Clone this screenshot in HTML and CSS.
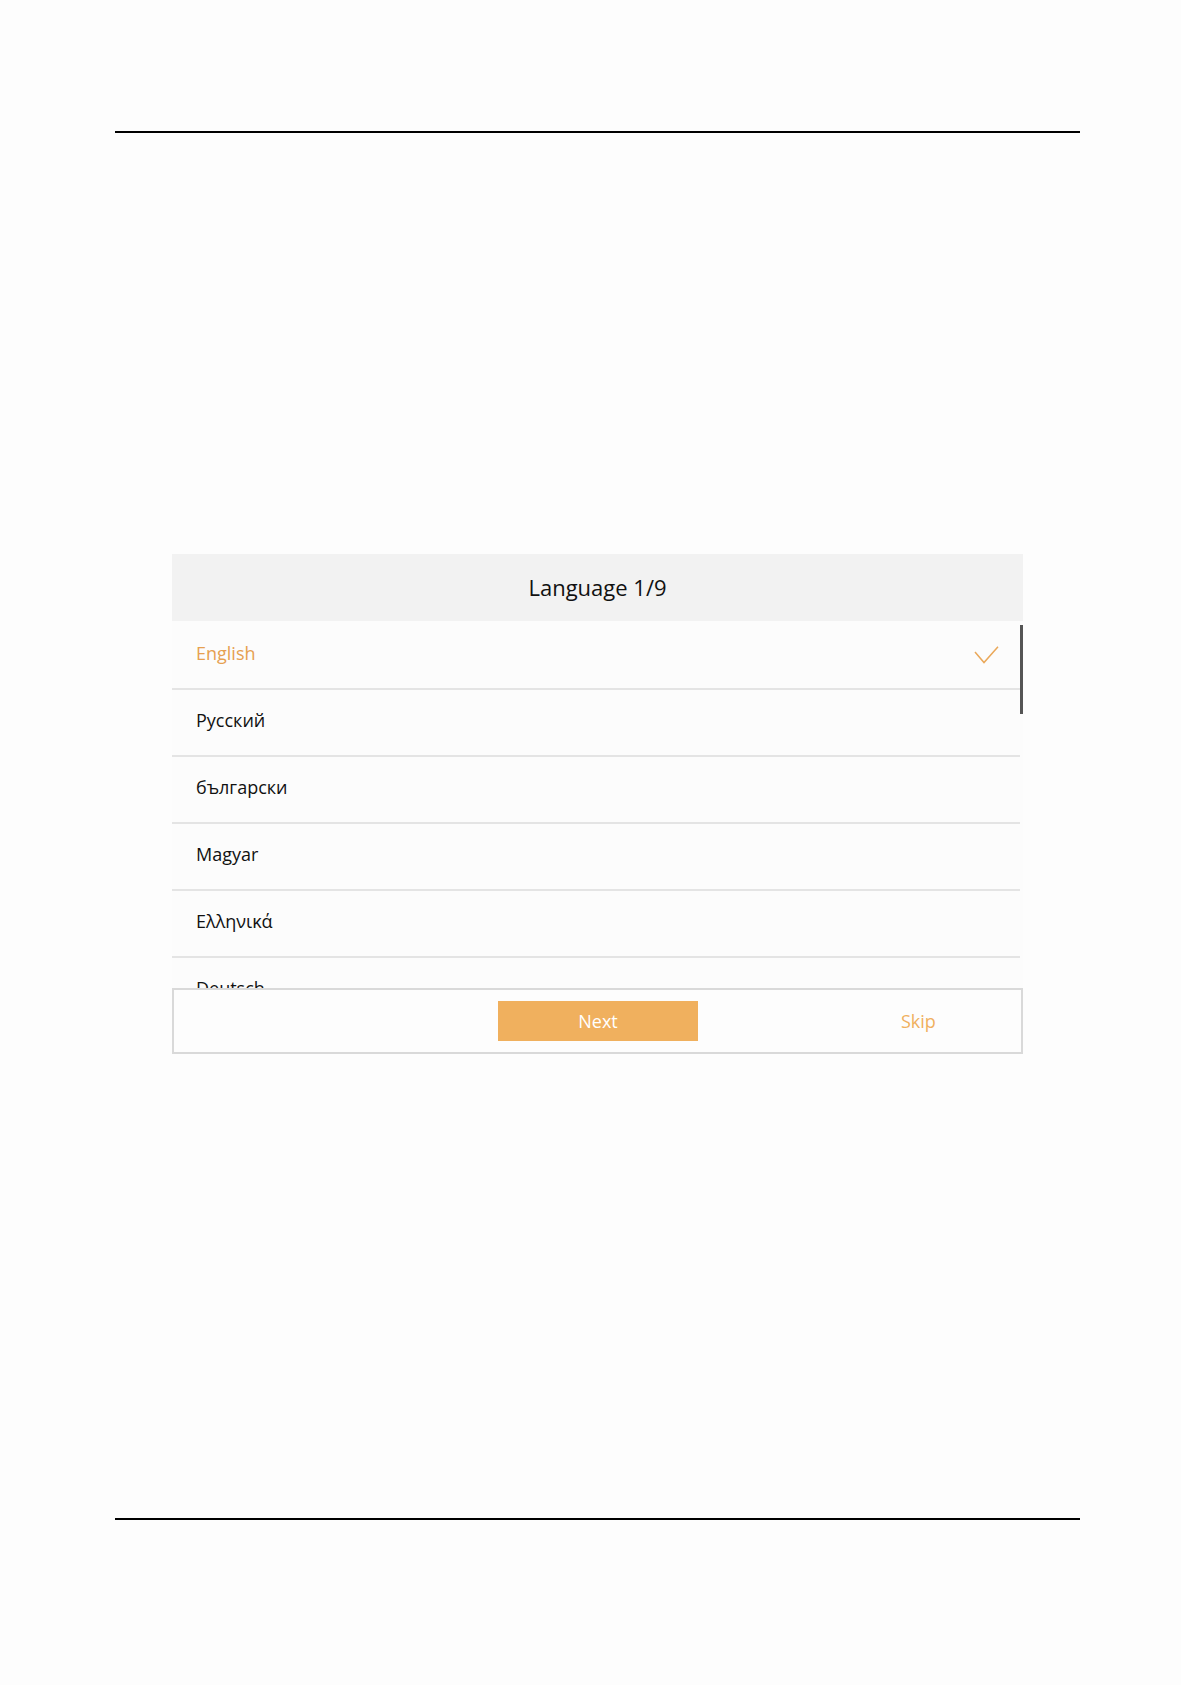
FILE: index.html
```html
<!DOCTYPE html>
<html>
<head>
<meta charset="utf-8">
<link rel="stylesheet" href="styles.css">
</head>
<body>
<div class="page">
  <div class="rule"></div>
  <div class="panel">
    <div class="panel-head">Language 1/9</div>
    <div class="list">
      <div class="row selected">
        <span>English</span>
        <svg class="check" width="26" height="20" viewBox="0 0 26 20"><path d="M1 6 L10 16.5 L24 0.8" fill="none" stroke="#eaa85a" stroke-width="1.5"/></svg>
      </div>
      <div class="row"><span>Русский</span></div>
      <div class="row"><span>български</span></div>
      <div class="row"><span>Magyar</span></div>
      <div class="row"><span>Ελληνικά</span></div>
      <div class="row"><span>Deutsch</span></div>
      <div class="scrollbar"></div>
    </div>
    <div class="panel-foot">
      <button class="btn-next">Next</button>
      <span class="skip">Skip</span>
    </div>
  </div>
  <div class="rule bottom"></div>
</div>
</body>
</html>
```
FILE: styles.css
```css
html, body {
  margin: 0;
  padding: 0;
  background: #fdfdfd;
}
body {
  font-family: "Open Sans", "Noto Sans", sans-serif;
  color: #111;
}
.page {
  padding: 131px 101px 0 115px;
  height: 1685px;
  box-sizing: border-box;
}
.rule {
  height: 2px;
  background: #000;
}
.rule.bottom {
  margin-top: 464px;
}
.panel {
  margin: 421px 0 0 57px;
  width: 851px;
}
.panel-head {
  height: 67px;
  background: #f2f2f2;
  display: flex;
  align-items: center;
  justify-content: center;
  font-size: 22px;
  padding-bottom: 2px;
  box-sizing: border-box;
  color: #111;
}
.list {
  position: relative;
  height: 365px;
  padding-top: 2px;
  overflow: hidden;
  padding-right: 3px;
  background: #fcfcfc;
}
.row {
  box-sizing: border-box;
  height: 67px;
  border-bottom: 2px solid #e4e4e4;
  background: #fcfcfc;
  display: flex;
  align-items: center;
  justify-content: space-between;
  padding: 0 20px 6px 24px;
  font-size: 18px;
  color: #111;
}
.row.selected {
  color: #e6a050;
}
.check {
  display: block;
  margin-top: 6px;
}
.scrollbar {
  position: absolute;
  right: 0;
  top: 4px;
  width: 3px;
  height: 89px;
  background: #555;
}
.panel-foot {
  height: 62px;
  border: 2px solid #d9d9d9;
  background: #fdfdfd;
  display: flex;
  align-items: center;
  position: relative;
}
.btn-next {
  margin-left: 324px;
  width: 200px;
  height: 40px;
  border: none;
  background: #f0b05e;
  color: #fff;
  font-family: inherit;
  font-size: 18px;
  padding: 0;
}
.skip {
  margin-left: 203px;
  color: #f0b05e;
  font-size: 18px;
}
```
